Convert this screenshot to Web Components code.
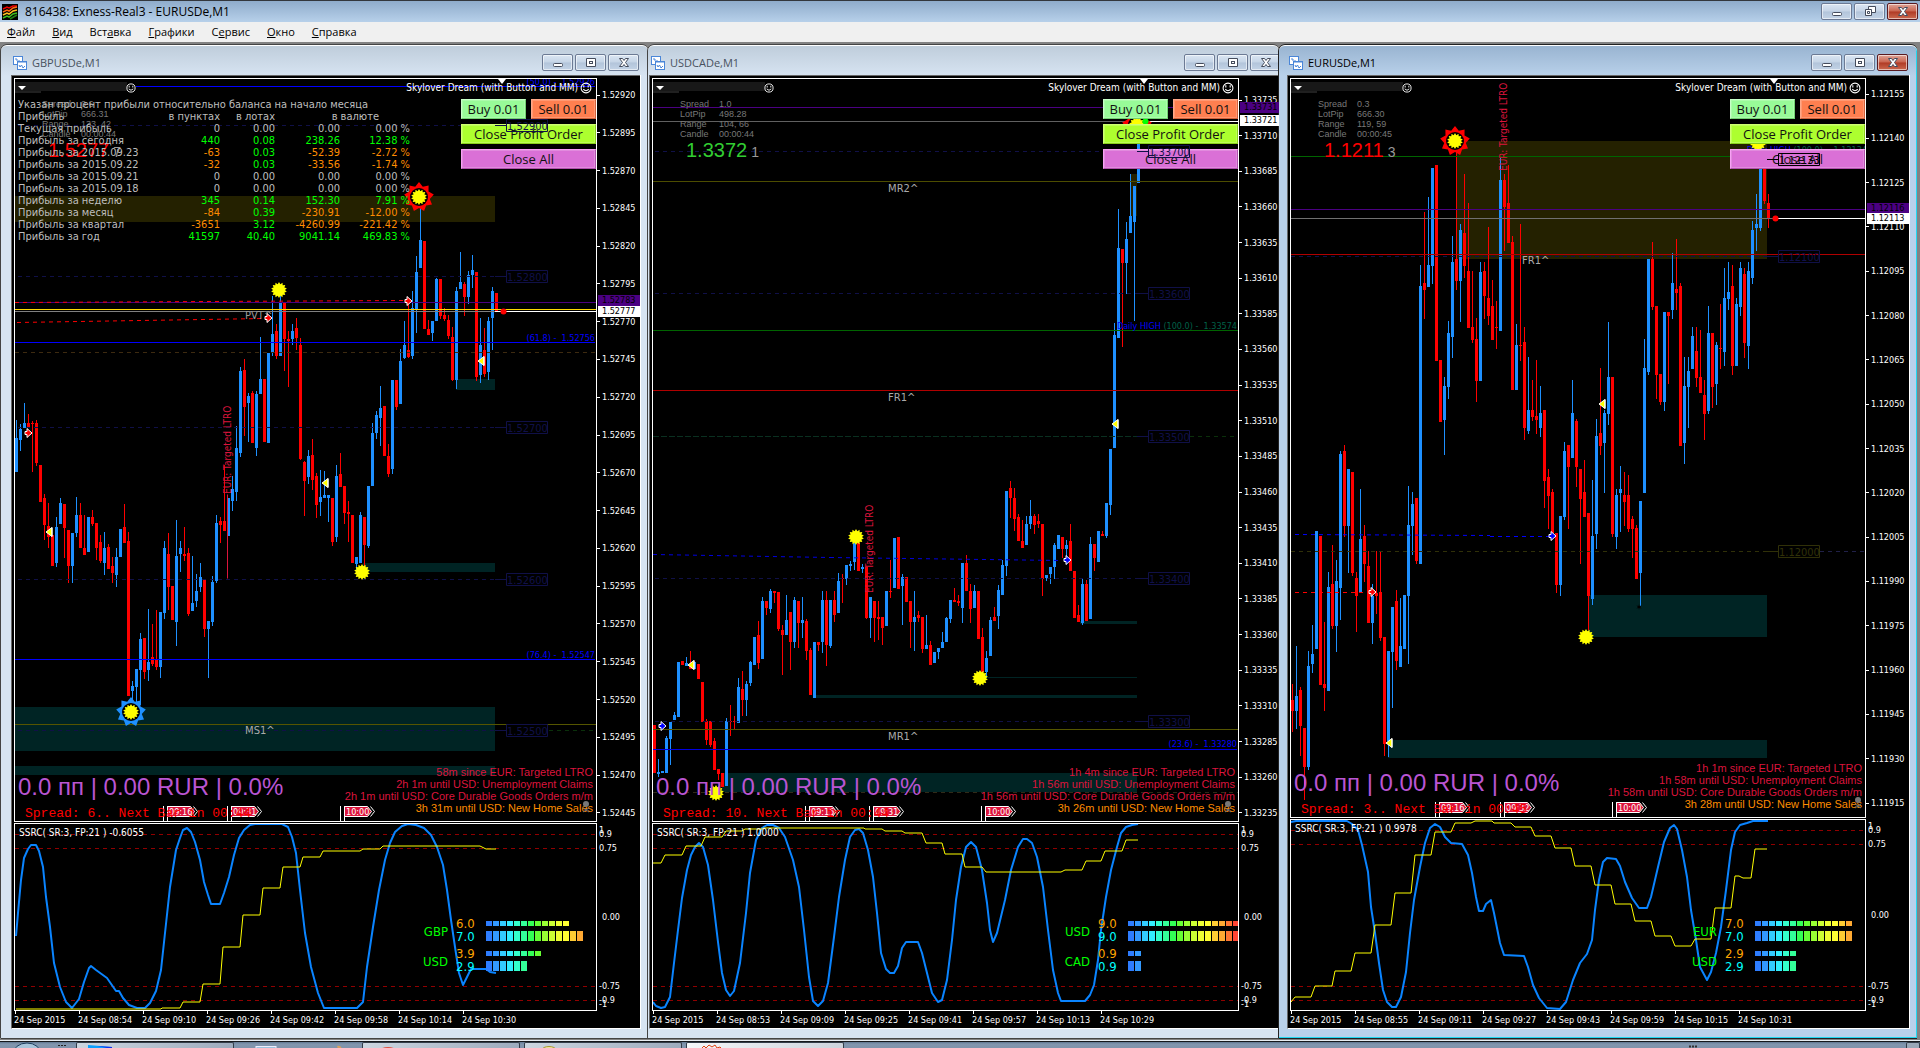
<!DOCTYPE html>
<html lang="ru">
<head>
<meta charset="utf-8">
<title>816438: Exness-Real3 - EURUSDe,M1</title>
<style>
html,body{margin:0;height:100%;background:#828282}
body{font-family:"Open Sans","Noto Sans",sans-serif;font-size:12px;overflow:hidden}
</style>
</head>
<body>
<mt-terminal></mt-terminal>
<script>
const TAHOMA = '"DejaVu Sans Condensed","DejaVu Sans",sans-serif';

/* Candles: colour, high, body top, body bottom, low; one every four pixels. */
const CHARTS = {
GBPUSDe: {
  ox:15, subTop:824, start:16,
  candles:`b,420,438,472,472 b,424,429,440,451 b,403,423,428,428 r,414,423,427,427 r,421,423,424,472 r,420,423,463,466 r,465,465,502,502 r,494,498,525,540 r,503,526,537,548 r,535,535,566,566 b,517,527,563,567 b,498,503,524,524 r,504,504,528,558 r,530,530,566,583 b,533,533,566,583 b,497,515,533,537 r,503,515,548,548 r,515,548,555,555 b,517,517,552,552 r,510,517,524,526 r,523,523,548,560 r,535,542,561,563 b,532,548,563,575 r,544,547,569,569 r,557,566,573,583 b,548,557,575,587 b,529,529,557,557 r,504,527,543,543 r,532,541,696,696 b,681,686,691,712 b,669,669,687,705 b,633,639,670,705 r,638,638,672,679 b,609,662,670,681 r,624,657,664,666 r,610,659,667,670 b,612,612,667,678 b,541,548,613,619 r,533,554,587,610 r,586,586,620,620 b,520,556,622,646 b,541,548,554,572 r,527,554,556,561 r,548,553,614,616 b,556,603,611,611 b,574,591,601,607 b,563,577,587,592 r,580,580,629,637 b,621,621,629,678 b,576,582,622,626 b,515,523,581,583 r,517,521,525,543 r,465,521,531,531 b,498,498,536,536 b,476,489,501,511 b,426,448,492,501 b,367,371,453,457 r,359,370,407,436 b,393,396,403,442 r,391,393,443,443 b,391,394,448,456 b,337,379,394,394 r,379,379,442,442 b,353,353,443,443 b,296,334,353,356 r,324,331,356,359 b,296,303,356,356 r,303,303,339,371 r,331,339,341,387 b,324,331,339,345 r,318,328,338,350 r,338,345,459,460 r,461,462,481,516 b,450,456,477,484 r,439,455,480,490 r,473,476,505,518 b,470,497,502,516 b,471,495,498,498 b,495,495,498,522 r,498,498,542,546 b,465,476,537,542 r,453,474,487,487 r,486,486,513,524 r,501,512,514,542 r,515,515,563,563 b,557,557,564,570 b,512,515,563,563 r,517,517,545,567 b,486,486,546,548 b,423,433,486,486 b,411,415,433,439 b,386,408,418,446 r,406,406,456,456 r,444,456,474,477 b,380,380,469,474 r,380,380,407,410 b,349,361,404,404 b,321,345,358,359 r,300,350,357,358 b,291,308,356,359 b,256,272,310,333 b,205,240,268,268 r,241,241,329,329 r,320,329,335,335 b,321,321,333,341 b,278,279,321,321 r,279,279,316,319 r,308,315,319,321 r,315,320,336,339 r,327,337,380,381 b,287,291,380,389 b,252,282,289,289 r,282,284,297,316 b,271,275,297,304 b,255,270,275,288 r,272,272,377,381 b,318,345,375,383 r,328,350,374,377 b,317,321,372,380 b,287,291,318,350 r,293,293,312,312`,
  axis:['1.52920','1.52895','1.52870','1.52845','1.52820','1.52795','1.52770','1.52745','1.52720','1.52695','1.52670','1.52645','1.52620','1.52595','1.52570','1.52545','1.52520','1.52495','1.52470','1.52445'],
  tags:[['1.52783',300,'#4b0082','#000'],['1.52777',311,'#fff','#000']],
  boxes:[[15,196,495,222,'#242100'],[456,379,495,390,'#002424'],[363,563,495,572,'#002424'],[15,707,495,751,'#002424'],[15,766,495,775,'#002424']],
  lines:[[136,86,595,86,'#00f',''],[18,125,495,125,'#101048','4 4'],[18,276,495,276,'#101048','4 4'],[15,302,597,302,'#4b0082',''],[15,302,405,300,'#f00','4 4'],[15,309,597,309,'#ffd700',''],[15,311,495,311,'#808080',''],[495,311,597,311,'#fff',''],[17,322,265,318,'#f00','4 4'],[15,342,595,342,'#00f',''],[15,352,597,352,'#3d2a10','4 4'],[18,427,495,427,'#101048','4 4'],[18,579,495,579,'#101048','4 4'],[15,659,595,659,'#00f',''],[15,724,597,724,'#555500',''],[18,730,495,730,'#101048','4 4'],[549,730,597,730,'#0a300a','4 4'],[227,494,227,578,'#dc143c','']],
  texts:[[245,319,'PVT^','#999'],[245,734,'MS1^','#aaa']],
  right:[[81,'(50.0) -  1.52926'],[337,'(61.8) -  1.52756'],[654,'(76.4) -  1.52547']],
  levels:[[125,'1.52900','#101048'],[276,'1.52800','#101048'],[427,'1.52700','#101048'],[579,'1.52600','#101048'],[730,'1.52500','#101048']],
  levelX:506, ltro:[227,494],
  suns:[[279,290],[419,197,'#f00'],[131,712,'#1e90ff'],[362,572]],
  tris:[[49,532],[325,483],[481,361]],
  arrows:[[408,301,'#f00'],[268,318,'#f00'],[28,433,'#f00']],
  dots:[[503,311,'#f00']],
  flags:[[163,'09:16'],[227,'09:31'],[340,'10:00']], flagY:806,
  info:['0.6','666.31','133, 42','00:00:44'], big:['1.5277','7','#f00'],
  spread:'Spread: 6.. Next Bar in 00:44',
  news:['58m since EUR: Targeted LTRO','2h 1m until USD: Unemployment Claims','2h 1m until USD: Core Durable Goods Orders m/m','3h 31m until USD: New Home Sales'],
  osc:'SSRC( SR:3, FP:21 ) -0.6055', oscLevels:[834,848,986,1000],
  blue:'16,936 18,913 21,880 24,858 28,849 31,845 36,845 39,851 43,867 46,897 50,927 54,963 60,987 66,1002 72,1008 79,999 84,982 89,968 91,966 96,970 107,978 116,991 119,991 123,998 129,1005 137,1008 145,1008 150,1003 156,991 161,970 165,933 170,887 176,850 180,838 183,830 187,828 191,832 195,842 200,860 204,882 208,895 211,904 220,904 224,893 229,877 234,855 239,838 244,830 250,825 255,824 282,824 288,827 292,837 296,853 300,890 305,933 311,967 318,993 324,1008 357,1008 363,1002 367,967 373,927 379,890 385,860 390,843 395,832 402,826 408,824 416,825 424,828 431,835 437,847 443,865 447,890 451,920 455,947 459,973 463,985 471,969 486,969 490,972 496,973',
  yellow:'16,1009 161,1009 162,1008 180,1008 183,1002 200,1002 203,984 220,984 223,947 240,947 243,915 260,915 263,888 280,888 283,867 300,867 303,857 320,857 323,851 360,851 363,849 380,849 383,846 480,846 486,849 496,849',
  strength:[['GBP','6.0','7.0',12,14],['USD','3.9','2.9',8,6]],
  times:['24 Sep 2015','24 Sep 08:54','24 Sep 09:10','24 Sep 09:26','24 Sep 09:42','24 Sep 09:58','24 Sep 10:14','24 Sep 10:30']
},
USDCADe: {
  ox:653, subTop:824, start:654,
  candles:`r,725,725,773,773 b,759,772,774,777 b,771,771,773,773 b,736,738,773,773 b,722,722,739,765 b,712,715,720,720 b,662,662,717,717 r,661,661,665,665 b,657,663,666,666 r,651,665,669,669 b,662,662,669,669 r,664,664,679,679 r,682,682,722,722 r,719,721,740,745 r,721,721,745,747 r,738,741,770,770 r,769,769,774,780 r,773,773,787,787 b,718,721,786,786 r,705,721,722,736 r,716,721,722,729 b,678,687,723,723 r,671,689,700,716 b,681,684,700,716 b,661,662,683,686 b,637,637,665,665 r,621,635,663,669 b,597,601,659,659 r,601,601,608,615 b,589,591,609,613 r,591,591,593,603 r,592,592,629,631 r,625,630,635,675 b,595,620,635,635 r,612,612,642,670 b,597,600,642,648 r,601,601,623,648 b,597,620,623,638 r,619,621,651,660 r,648,650,695,695 b,642,642,698,698 r,642,642,645,651 b,591,600,642,653 r,591,600,645,666 b,600,600,646,648 r,591,600,615,622 b,573,581,613,613 r,574,578,579,603 b,565,565,579,585 b,561,564,566,571 b,543,543,562,570 r,543,543,571,571 b,564,567,569,573 r,567,567,618,619 b,597,597,618,638 r,601,601,618,642 r,601,617,619,640 r,617,617,628,645 b,591,591,626,626 r,560,591,592,598 b,538,538,588,588 r,537,537,589,589 b,574,577,586,625 r,577,577,602,602 r,601,601,622,648 b,591,617,622,651 r,611,615,618,622 r,617,617,649,653 b,615,645,649,649 r,641,645,665,665 b,652,652,663,663 b,648,648,652,659 b,632,642,648,648 b,617,618,642,642 b,600,600,619,623 r,588,600,602,602 r,595,601,603,606 b,563,563,608,623 r,555,563,591,591 r,584,591,609,623 b,585,591,608,608 r,591,591,639,639 r,628,637,672,672 b,651,658,672,678 b,617,620,656,656 r,607,617,621,621 b,585,590,616,629 b,560,565,595,595 b,491,491,566,576 r,481,488,498,518 r,488,498,519,531 r,514,517,541,541 r,520,541,548,548 b,516,524,545,545 b,500,516,524,529 r,514,516,525,534 r,514,521,524,528 r,524,524,579,596 b,575,575,578,581 b,567,567,574,584 b,543,545,567,579 b,535,535,549,549 r,537,537,549,558 b,540,545,549,560 r,524,541,571,571 r,571,571,618,618 r,605,615,622,622 b,578,584,623,625 r,580,584,621,621 b,537,544,619,619 r,544,544,558,571 b,531,531,562,562 r,531,534,536,536 b,503,503,536,538 b,449,449,505,515 b,323,335,448,448 b,209,248,338,338 r,249,249,263,347 b,222,239,263,294 b,174,216,233,233 b,186,186,222,321 b,121,121,183,183`,
  axis:['1.33735','1.33710','1.33685','1.33660','1.33635','1.33610','1.33585','1.33560','1.33535','1.33510','1.33485','1.33460','1.33435','1.33410','1.33385','1.33360','1.33335','1.33310','1.33285','1.33260','1.33235'],
  tags:[['1.33731',107,'#4b0082','#000'],['1.33721',120,'#fff','#000']],
  boxes:[[1130,174,1137,216,'#242100'],[1080,621,1137,624,'#002424'],[987,677,1137,678,'#002424'],[815,695,1137,698,'#002424'],[722,773,1137,792,'#002424']],
  lines:[[653,107,1239,107,'#4b0082',''],[653,121,1137,121,'#606060',''],[1137,121,1239,121,'#fff',''],[655,151,1138,151,'#101048','4 4'],[653,181,1239,181,'#4d4d00',''],[655,293,1138,293,'#101048','4 4'],[653,330,1239,330,'#006400',''],[653,390,1239,390,'#b00000',''],[653,436,1138,436,'#0a3020','6 2'],[1190,436,1239,436,'#0a300a','4 4'],[653,554,830,557,'#0000e0','4 4'],[830,557,1062,560,'#0000e0','4 4'],[655,578,1138,578,'#101048','4 4'],[655,721,1138,721,'#101048','4 4'],[653,729,1239,729,'#555500',''],[653,749,1237,749,'#0000e0',''],[653,792,1239,792,'#302a18','4 4']],
  texts:[[888,192,'MR2^','#aaa'],[888,401,'FR1^','#aaa'],[888,740,'MR1^','#aaa']],
  right:[[325,'Daily HIGH',' (100.0) -  1.33574'],[743,'(23.6) -  1.33280']],
  levels:[[151,'1.33700','#101048'],[293,'1.33600','#101048'],[436,'1.33500','#101048'],[578,'1.33400','#101048'],[721,'1.33300','#101048']],
  levelX:1148, ltro:[869,593],
  suns:[[856,537],[980,678],[716,793],[1137,125,'#f00']],
  tris:[[691,665],[1115,424]],
  arrows:[[1067,560,'#00f'],[662,726,'#00f']],
  dots:[[1145,121,'#0f0']],
  flags:[[805,'09:15'],[869,'09:31'],[981,'10:00']], flagY:806,
  info:['1.0','498.28','104, 66','00:00:44'], big:['1.3372','1','#32cd32'],
  spread:'Spread: 10. Next Bar in 00:44',
  news:['1h 4m since EUR: Targeted LTRO','1h 56m until USD: Unemployment Claims','1h 56m until USD: Core Durable Goods Orders m/m','3h 26m until USD: New Home Sales'],
  osc:'SSRC( SR:3, FP:21 ) 1.0000', oscLevels:[834,848,986,1000],
  blue:'653,1002 656,1006 661,1008 665,1007 670,997 674,963 678,930 682,898 687,870 691,855 695,847 699,843 703,847 708,865 713,900 718,942 722,973 726,990 730,996 734,991 740,963 746,913 750,873 756,840 762,828 767,825 773,825 779,828 785,837 793,860 799,887 804,930 809,977 813,1001 818,1006 823,1001 828,983 834,937 839,897 845,860 850,837 855,830 859,829 863,833 868,850 873,877 877,913 881,953 886,969 890,973 894,973 898,966 902,948 906,942 918,942 922,953 928,977 932,993 938,1002 942,1000 947,980 952,940 956,900 961,867 966,847 971,842 976,847 982,870 987,903 990,930 993,942 997,933 1005,900 1011,870 1018,847 1023,839 1027,839 1032,843 1037,857 1043,887 1048,930 1053,970 1058,993 1061,1001 1085,1001 1090,995 1094,985 1098,960 1101,930 1106,897 1111,870 1117,847 1121,833 1126,827 1132,825 1138,824',
  yellow:'653,863 661,863 665,855 682,855 686,846 701,846 705,837 722,837 726,831 742,831 745,829 762,829 764,828 864,828 865,829 882,829 885,831 902,831 905,833 922,833 926,843 942,843 945,854 962,854 965,867 982,867 986,872 1061,872 1065,870 1082,870 1086,861 1101,861 1105,851 1122,851 1126,840 1138,840',
  strength:[['USD','9.0','9.0',16,16],['CAD','0.9','0.9',2,2]],
  times:['24 Sep 2015','24 Sep 08:53','24 Sep 09:09','24 Sep 09:25','24 Sep 09:41','24 Sep 09:57','24 Sep 10:13','24 Sep 10:29']
},
EURUSDe: {
  ox:1291, subTop:820, start:1292,
  candles:`r,684,700,711,732 b,646,696,711,729 r,687,690,726,756 r,728,728,767,800 b,651,666,767,770 b,625,654,664,673 b,531,531,649,649 r,536,536,685,685 r,622,684,688,711 b,572,587,691,691 r,545,584,626,629 b,560,581,626,652 b,451,454,588,620 r,445,451,526,537 b,469,469,526,573 r,472,472,573,576 r,572,578,596,632 b,489,539,593,593 r,525,536,564,582 r,551,566,623,623 b,584,596,623,644 r,551,593,596,614 r,551,592,638,641 r,637,637,744,756 b,651,651,741,757 b,607,607,652,708 r,590,601,661,670 b,598,646,667,667 b,595,595,649,649 b,486,525,596,664 b,492,504,526,555 r,498,498,561,564 b,265,286,564,564 r,212,283,290,319 b,197,265,287,287 b,168,168,266,284 r,165,165,361,361 r,360,360,422,422 b,377,386,420,455 b,321,333,387,399 b,236,262,337,358 r,150,259,281,290 b,224,230,281,322 r,174,233,266,278 r,203,271,328,328 r,271,327,340,343 r,318,339,381,402 b,262,272,381,381 r,262,271,296,319 r,227,298,316,325 r,280,306,340,340 r,301,327,328,349 b,158,180,331,331 r,174,180,207,251 r,165,203,243,243 r,236,242,390,390 b,324,345,390,390 r,224,345,346,361 r,327,342,428,440 b,357,410,431,434 r,380,410,417,421 r,360,416,420,434 b,386,413,428,437 r,410,410,481,508 r,469,477,496,529 r,489,492,533,533 r,533,533,585,593 b,516,516,585,596 b,442,451,517,520 r,445,445,467,529 b,380,413,458,458 r,419,421,467,487 r,469,469,499,564 r,460,492,517,517 r,513,513,596,630 b,480,536,599,605 b,419,436,534,549 r,368,433,446,455 b,410,413,443,493 b,322,377,414,425 r,377,377,534,537 b,489,495,537,549 b,466,489,493,532 r,472,495,502,526 r,475,495,529,532 r,516,519,529,558 r,525,528,579,579 b,501,501,573,606 b,339,368,493,493 b,259,259,372,375 r,242,259,307,310 r,306,306,375,399 r,374,374,402,405 b,312,312,402,411 r,312,312,316,384 b,253,283,310,319 r,239,289,293,310 r,283,286,446,446 b,357,386,443,464 b,357,371,387,428 b,327,336,369,369 r,327,351,378,387 r,330,377,393,393 r,380,395,414,440 b,306,333,411,414 r,333,333,387,408 b,342,345,384,405 r,304,348,349,369 b,268,298,352,366 b,262,292,299,310 r,265,286,366,375 b,298,304,366,366 b,262,268,307,316 r,268,274,343,358 b,262,271,346,369 b,221,230,278,284 b,194,224,228,251 b,145,145,228,231 r,169,169,201,204 r,194,203,219,228`,
  axis:['1.12155','1.12140','1.12125','1.12110','1.12095','1.12080','1.12065','1.12050','1.12035','1.12020','1.12005','1.11990','1.11975','1.11960','1.11945','1.11930','1.11915'],
  tags:[['1.12116',208,'#4b0082','#000'],['1.12113',218,'#fff','#000']],
  boxes:[[1456,141,1767,259,'#242100'],[1589,595,1767,637,'#002424'],[1388,740,1767,758,'#002424']],
  lines:[[1291,156,1866,156,'#006400',''],[1291,209,1866,209,'#4b0082',''],[1291,218,1775,218,'#707070',''],[1775,218,1866,218,'#fff',''],[1291,254,1866,254,'#b00000',''],[1291,256,1768,256,'#101048','4 4'],[1295,534,1490,535,'#00f','4 4'],[1490,536,1549,536,'#00f','4 4'],[1291,551,1768,551,'#303008','4 4'],[1820,551,1866,551,'#202048','4 4'],[1295,592,1370,592,'#f00','4 4']],
  texts:[[1522,264,'FR1^','#aaa']],
  right:[[149,'Daily HIGH',' (100.0) -  1.12134']],
  levels:[[159,'1.12133','#000'],[256,'1.12100','#101048'],[551,'1.12000','#303008']],
  levelX:1778, ltro:[1503,171],
  suns:[[1455,141,'#f00'],[1758,143],[1586,637]],
  tris:[[1602,404],[1389,743]],
  arrows:[[1552,536,'#00f'],[1372,592,'#f00']],
  dots:[[1775,218,'#f00']], star:[1639,607],
  flags:[[1435,'09:16'],[1500,'09:32'],[1612,'10:00']], flagY:802,
  info:['0.3','666.30','119, 59','00:00:45'], big:['1.1211','3','#f00'],
  spread:'Spread: 3.. Next Bar in 00:45',
  news:['1h 1m since EUR: Targeted LTRO','1h 58m until USD: Unemployment Claims','1h 58m until USD: Core Durable Goods Orders m/m','3h 28m until USD: New Home Sales'],
  osc:'SSRC( SR:3, FP:21 ) 0.9978', oscLevels:[830,844,986,1000],
  blue:'1291,822 1296,821 1347,821 1352,824 1358,830 1362,845 1368,872 1371,907 1375,933 1379,963 1383,990 1387,1002 1392,1007 1396,1007 1401,997 1406,972 1410,933 1414,900 1420,867 1425,843 1430,828 1435,824 1440,827 1445,837 1451,843 1462,844 1468,855 1472,873 1476,897 1479,911 1483,911 1486,904 1491,900 1494,913 1500,943 1504,955 1524,956 1528,967 1533,985 1539,998 1547,1008 1560,1009 1566,1002 1573,980 1580,963 1587,954 1592,940 1595,910 1599,880 1603,862 1607,858 1616,859 1620,866 1625,882 1632,898 1639,908 1647,908 1651,897 1658,867 1664,842 1670,828 1674,825 1677,829 1682,850 1687,877 1691,910 1696,940 1700,967 1707,980 1711,972 1716,953 1721,927 1726,890 1731,850 1735,832 1740,825 1747,823 1753,821 1768,821',
  yellow:'1291,1002 1295,997 1311,997 1315,986 1332,986 1335,971 1351,971 1355,953 1371,953 1375,925 1391,925 1395,893 1411,893 1415,855 1431,855 1435,832 1451,832 1455,823 1471,823 1475,821 1492,821 1494,823 1511,823 1515,827 1531,827 1535,836 1551,836 1555,848 1571,848 1575,866 1591,866 1595,885 1611,885 1615,904 1631,904 1635,921 1651,921 1655,936 1671,936 1675,946 1691,946 1695,939 1711,939 1715,908 1731,908 1735,876 1739,876 1743,878 1751,878 1755,849 1767,849',
  strength:[['EUR','7.0','7.0',14,14],['USD','2.9','2.9',6,6]],
  times:['24 Sep 2015','24 Sep 08:55','24 Sep 09:11','24 Sep 09:27','24 Sep 09:43','24 Sep 09:59','24 Sep 10:15','24 Sep 10:31']
}
};

/* ---------- drawing helpers ---------- */
const burst = (x, y, n, r1, r2, fill) => {
  let p = '';
  for (let i = 0; i < n * 2; i++) {
    const a = Math.PI * i / n - Math.PI / 2, r = i % 2 ? r2 : r1;
    p += (x + r * Math.cos(a)).toFixed(1) + ',' + (y + r * Math.sin(a)).toFixed(1) + ' ';
  }
  return `<polygon points="${p}" fill="${fill}"/>`;
};
const sun = ([x, y, ring]) => (ring ? burst(x, y, 9, 15, 11, ring) + `<circle cx="${x}" cy="${y}" r="9" fill="#000"/>` : '') + burst(x, y, 14, 8, 6, '#ff0');
const tri = ([x, y]) => `<path d="M${x + 3} ${y - 4.5}v9M${x - 3} ${y}l6 -4.5v9z" fill="#ff0" stroke="#fff"/>`;
const arrow = ([x, y, c]) => `<path d="M${x - 3} ${y - 1.5}h2v-3l5 4.5l-5 4.5v-3h-2z" fill="${c}" stroke="#fff"/>`;
const line = ([x1, y1, x2, y2, c, d]) => `<line x1="${x1}" y1="${y1 + .5}" x2="${x2}" y2="${y2 + .5}" stroke="${c}"${x1 === x2 ? ' transform="translate(.5 0)"' : ''}${d ? ` stroke-dasharray="${d}"` : ''}/>`;
const winIcon = {
  min: '<rect x="2.5" y="7.5" width="9" height="3" rx="1" fill="#fff" stroke="#454c5c"/>',
  max: '<path d="M2.5 2.5h9v8h-9z" fill="#fff" stroke="#454c5c"/><rect x="5.5" y="5.5" width="3" height="2" fill="#fff" stroke="#454c5c"/>',
  restore: '<path d="M5.5 1.5h7v6h-7z" fill="#fff" stroke="#454c5c"/><path d="M2.5 4.5h6v6h-6z" fill="#fff" stroke="#454c5c"/><path d="M4.5 6.5h2v2h-2z" fill="#fff" stroke="#454c5c"/>',
  close: '<path d="M2.5 2.5h3l1.5 2 1.5-2h3l-3 4 3 4h-3l-1.5-2-1.5 2h-3l3-4z" fill="#fff" stroke="#454c5c"/>'
};

class Base extends HTMLElement {
  constructor() { super(); this.attachShadow({ mode: 'open' }); }
  connectedCallback() { this.shadowRoot.innerHTML = `<style>${this.css()}</style>${this.html()}`; }
}

class WindowButtons extends Base {
  css() { return `
    :host{display:flex;gap:2px;flex:none}
    button{width:31px;height:17px;padding:0;border:1px solid #6c7a94;border-radius:2px;background:linear-gradient(#dbe6f3,#c5d4e6 48%,#b2c4da 52%,#c3d3e6);box-shadow:inset 0 0 0 1px #ffffff90;display:grid;place-items:center}
    svg{width:14px;height:13px;display:block}
    :host([active]) button:last-child{border-color:#591a20;background:linear-gradient(#dfa598,#c9644f 48%,#b03a25 52%,#cb6a50)}`; }
  html() {
    return ['min', this.getAttribute('middle') || 'max', 'close'].map(k => `<button aria-label="${k}"><svg viewBox="0 0 14 13">${winIcon[k]}</svg></button>`).join('');
  }
}
customElements.define('window-buttons', WindowButtons);

class TitleBar extends Base {
  css() { return `
    :host{display:flex;align-items:center;height:21px;border-top:1px solid #33373d;background:linear-gradient(#8faccb,#b7d0ea);padding:0 2px;color:#000}
    svg{width:16px;height:16px;margin-right:7px}
    span{flex:1;font-size:12px;line-height:20px}`; }
  html() { return `<svg viewBox="0 0 16 16"><rect width="16" height="16" fill="#000"/><g fill="none" stroke-width="1.5"><path d="M1 5l4-2 2 1 4-2 4 0" stroke="#f00000"/><path d="M1 8l4-2 2 1 4-3 4-1" stroke="#ff6a10"/><path d="M1 11l4-2 2 1 4-3 4-1" stroke="#ffc020"/><path d="M1 14l4-2 2 1 4-3 4-1" stroke="#40c020"/><path d="M8 15l7-4" stroke="#208010"/></g></svg><span>816438: Exness-Real3 - EURUSDe,M1</span><window-buttons active middle="restore"></window-buttons>`; }
}
customElements.define('mt-title-bar', TitleBar);

class MenuBar extends Base {
  css() { return `
    :host{display:flex;gap:17px;height:20px;padding:0 7px;background:#f0f0f0}
    button{border:0;padding:0;background:none;font:11px/20px "Open Sans","Noto Sans",sans-serif;color:#000}
    u{text-underline-offset:1px}`; }
  html() { return ['<u>Ф</u>айл', '<u>В</u>ид', 'Вст<u>а</u>вка', '<u>Г</u>рафики', 'С<u>е</u>рвис', '<u>О</u>кно', '<u>С</u>правка'].map(t => `<button>${t}</button>`).join(''); }
}
customElements.define('mt-menu-bar', MenuBar);

class ProfitReport extends Base {
  css() { return `
    :host{display:block;font:11px/12px ${TAHOMA};color:#bebebe}
    table{border-collapse:collapse;table-layout:fixed;width:392px}
    caption{text-align:left;white-space:nowrap;height:12px}
    td,th{padding:0;height:12px;font-weight:400;text-align:right;white-space:nowrap}
    th:first-child{text-align:left}
    .cur{padding-right:31px}
    .p{color:#0f0}.n{color:#ff8c00}`; }
  html() {
    const rows = [['Текущая прибыль', '0', '0.00', '0.00', '0.00'], ['Прибыль за сегодня', '440', '0.08', '238.26', '12.38'], ['Прибыль за 2015.09.23', '-63', '0.03', '-52.39', '-2.72'], ['Прибыль за 2015.09.22', '-32', '0.03', '-33.56', '-1.74'], ['Прибыль за 2015.09.21', '0', '0.00', '0.00', '0.00'], ['Прибыль за 2015.09.18', '0', '0.00', '0.00', '0.00'], ['Прибыль за неделю', '345', '0.14', '152.30', '7.91'], ['Прибыль за месяц', '-84', '0.39', '-230.91', '-12.00'], ['Прибыль за квартал', '-3651', '3.12', '-4260.99', '-221.42'], ['Прибыль за год', '41597', '40.40', '9041.14', '469.83']];
    const k = v => v > 0 ? 'p' : v < 0 ? 'n' : '';
    return `<table><caption>Указан процент прибыли относительно баланса на начало месяца</caption>
      <colgroup><col style="width:132px"><col style="width:70px"><col style="width:55px"><col style="width:65px"><col style="width:70px"></colgroup>
      <tr><th>Прибыль</th><th>в пунктах</th><th>в лотах</th><th colspan="2" class="cur">в валюте</th></tr>
      ${rows.map(r => `<tr><th>${r[0]}</th>${r.slice(1).map((v, i) => `<td class="${k(+v)}">${v}${i === 3 ? ' %' : ''}</td>`).join('')}</tr>`).join('')}</table>`;
  }
}
customElements.define('profit-report', ProfitReport);

class TradePanel extends Base {
  css() { return `
    :host{display:grid;grid-template-columns:65px 65px;gap:5px}
    button{height:20px;padding:0;border:1px solid;border-radius:0;font:13px/16px "Open Sans","Noto Sans",sans-serif;color:#111;white-space:nowrap;box-shadow:inset 0 0 0 1px #ffffff30}
    .wide{grid-column:1/3}
    .buy{background:#98fb98;border-color:#c8ffc8 #70d070 #70d070 #c8ffc8}
    .sell{background:#ff7f50;border-color:#ffa888 #d06038 #d06038 #ffa888}
    .profit{background:#adff2f;border-color:#d0ff70 #88d018 #88d018 #d0ff70}
    .all{background:#da70d6;border-color:#f8a0f5 #b050ac #b050ac #f8a0f5}`; }
  html() { return `<button class="buy">Buy 0.01</button><button class="sell">Sell 0.01</button><button class="wide profit">Close Profit Order</button><button class="wide all">Close All</button>`; }
}
customElements.define('trade-panel', TradePanel);

class MarketInfo extends Base {
  css() { return `
    :host{display:block;font:9px/10px "Liberation Sans",sans-serif;color:#787878}
    dl{margin:0;display:grid;grid-template-columns:39px 1fr}dt,dd{margin:0;white-space:nowrap}
    p{margin:0 0 0 6px;line-height:22px;font-size:20px;color:var(--price)}
    small{font-size:14px;color:#999;margin-left:4px}`; }
  html() {
    const c = CHARTS[this.getAttribute('symbol')];
    return `<dl>${['Spread', 'LotPip', 'Range', 'Candle'].map((k, i) => `<dt>${k}</dt><dd>${c.info[i]}</dd>`).join('')}</dl><p style="--price:${c.big[2]}">${c.big[0]}<small>${c.big[1]}</small></p>`;
  }
}
customElements.define('market-info', MarketInfo);

class StrengthMeter extends Base {
  css() { return `
    :host{display:grid;grid-template-columns:30px 38px 110px;font:13px/13px ${TAHOMA}}
    b{font-weight:400;color:#0f0;line-height:30px;text-align:right;height:30px}
    div{padding-left:8px}
    span{display:block;color:#ffa500}span+span{color:#0ff}
    .bars{padding:4px 0 0;display:grid;grid-template-rows:5px 10px;gap:5px;align-content:start;overflow:hidden}
    .bars p{margin:0;display:flex;gap:1px}
    i{flex:none;width:6px;height:100%}`; }
  html() {
    const cols = ['#2e7dff', '#3399ff', '#33ccff', '#33eeff', '#33ffcc', '#33ff99', '#33ff55', '#66ff33', '#99ff33', '#ccff33', '#eeff33', '#ffff33', '#ffcc33', '#ffaa33', '#ff7733', '#ff4433'];
    const bar = n => `<p>${cols.slice(0, n).map(c => `<i style="background:${c}"></i>`).join('')}</p>`;
    return CHARTS[this.getAttribute('symbol')].strength.map(s => `<b>${s[0]}</b><div><span>${s[1]}</span><span>${s[2]}</span></div><div class="bars">${bar(s[3])}${bar(s[4])}</div>`).join('');
  }
}
customElements.define('strength-meter', StrengthMeter);

class PricePlot extends Base {
  css() { return `
    :host{display:block;position:relative;overflow:hidden;color:#fff}
    svg{position:absolute;inset:0;width:100%;height:100%}
    text{white-space:pre}
    .px{font:10px "DejaVu Sans",sans-serif}
    .event{font:10px ${TAHOMA}}
    .fib{font:9px ${TAHOMA};text-anchor:end}
    .lvl{font:11px ${TAHOMA}}
    .flag{font:9px ${TAHOMA}}
    .mask{position:absolute;left:0;top:3px;width:121px;height:11px;box-sizing:border-box;display:flex;align-items:center;justify-content:space-between;padding-left:3px;background:linear-gradient(#181818,#181818) 0 0/112px 9px no-repeat,linear-gradient(#202020,#202020) 0 0/26px 11px no-repeat}
    .mask i{border:4px solid transparent;border-top-color:#fff;border-bottom:0}
    .mask svg,.ea svg{position:static;width:10px;height:10px}
    .ea svg{width:12px;height:12px}
    .ea{position:absolute;right:4px;top:2px;display:flex;align-items:center;gap:2px;font:10px/14px ${TAHOMA}}
    trade-panel{position:absolute;top:20px;right:0}
    profit-report{position:absolute;left:3px;top:20px}
    market-info{position:absolute;left:27px;top:20px}
    .total,.spread{position:absolute;left:3px;white-space:nowrap}
    .total{bottom:20px;font:24px/28px "Liberation Sans",sans-serif;color:#ba55d3}
    .spread{left:10px;bottom:0;font:13px/15px "Liberation Mono",monospace;color:#f00}
    ul{position:absolute;right:3px;bottom:7px;margin:0;padding:0;list-style:none;text-align:right;font:11px/12px "Liberation Sans",sans-serif;color:#dc143c;white-space:nowrap}
    li:last-child{color:#ff8c00}
    .levels{pointer-events:none}`; }
  html() {
    const id = this.getAttribute('symbol'), c = CHARTS[id];
    const candles = c.candles.split(' ').map((s, i) => {
      const [k, h, t, b, l] = s.split(','), x = c.start + 4 * i, f = k === 'r' ? '#f00' : '#1e90ff';
      return `<path fill="${f}" d="M${x} ${h}h1V${l}h-1zM${x - 1} ${t}h3V${Math.max(b, +t + 1)}h-3z"/>`;
    }).join('');
    const face = '<svg viewBox="0 0 11 11" fill="none" stroke="#fff"><circle cx="5.5" cy="5.5" r="4.5"/><path d="M3.5 3v2M7.5 3v2M3 6.5q2.5 3 5 0"/></svg>';
    const flags = c.flags.map(([x, t]) => `<path d="M${x + .5} ${c.flagY}v16M${x + 4.5} ${c.flagY}v16" stroke="#fff"/><path d="M${x + 4.5} ${c.flagY + .5}h23l4 5-4 5h-23z" fill="#dc143c" stroke="#fff"/><path d="M${x + 30.5} ${c.flagY + .5}l4 5-4 5" fill="none" stroke="#fff"/><text class="flag" x="${x + 6}" y="${c.flagY + 9}" fill="#fff">${t}</text>`).join('');
    const r = c.levelX + 89;
    const right = c.right.map(t => t.length === 3 ? `<text class="fib" x="${r}" y="${t[0] + 4}" fill="#006048"><tspan fill="#00f">${t[1]}</tspan>${t[2]}</text>` : `<text class="fib" x="${r}" y="${t[0] + 4}" fill="#00f">${t[1]}</text>`).join('');
    const [eventX, eventY] = c.ltro;
    return `<svg><g transform="translate(${-c.ox} -79)">
      ${c.boxes.map(b => `<rect x="${b[0]}" y="${b[1]}" width="${b[2] - b[0]}" height="${b[3] - b[1]}" fill="${b[4]}"/>`).join('')}
      ${candles}${c.lines.map(line).join('')}${right}
      ${c.texts.map(t => `<text class="px" x="${t[0]}" y="${t[1]}" fill="${t[3]}">${t[2]}</text>`).join('')}
      <text class="event" fill="#dc143c" transform="translate(${eventX + 4} ${eventY}) rotate(-90)">EUR: Targeted LTRO</text>
      ${c.tris.map(tri).join('')}${c.suns.map(sun).join('')}${c.arrows.map(arrow).join('')}
      ${c.star ? burst(c.star[0], c.star[1], 6, 3, 1, '#000') : ''}
      ${c.dots.map(d => `<circle cx="${d[0] + .5}" cy="${d[1] + .5}" r="3" fill="${d[2]}"/>`).join('')}
      <path d="M${c.levelX - 8} 79h8l-4 5z" fill="#fff"/>${flags}</g></svg>
      <div class="mask"><i></i>${face}</div>
      <market-info symbol="${id}"></market-info>
      ${this.hasAttribute('report') ? '<profit-report></profit-report>' : ''}
      <div class="ea">Skylover Dream (with Button and MM)${face}</div>
      <div class="spread">${c.spread}</div><div class="total">0.0 пп | 0.00 RUR | 0.0%</div>
      <ul>${c.news.map(n => `<li>${n}</li>`).join('')}</ul>
      <trade-panel></trade-panel>
      <svg class="levels"><g transform="translate(${-c.ox} -79)">${c.levels.map(([y, t, k]) => `<path d="M${c.levelX - 11} ${y + .5}h11M${c.levelX + .5} ${y - 5.5}h41v12h-41z" fill="none" stroke="${k}"/><text class="lvl" x="${c.levelX + 1}" y="${y + 5}" fill="${k}">${t}</text>`).join('')}
      <g transform="translate(${c.levelX + 80} ${c.flagY})" fill="#777"><circle cy="-2" r="3"/><path d="M-3 2l6 4M3 2l-6 4" stroke="#777"/></g></g></svg>`;
  }
}
customElements.define('price-plot', PricePlot);

class OscillatorPlot extends Base {
  css() { return `
    :host{display:block;position:relative;overflow:hidden;color:#fff}
    svg{position:absolute;inset:0;width:100%;height:100%}
    polyline{fill:none;stroke-linejoin:round}
    .name{position:absolute;left:4px;top:3px;font:10px/12px ${TAHOMA};white-space:nowrap}
    strength-meter{position:absolute;right:0;bottom:33px}`; }
  html() {
    const id = this.getAttribute('symbol'), c = CHARTS[id];
    return `<svg><g transform="translate(${-c.ox} ${-c.subTop})">${c.oscLevels.map(y => line([c.ox, y, c.ox + 600, y, '#900000', '4 4'])).join('')}
      <polyline points="${c.blue}" stroke="#0a84ff" stroke-width="2"/><polyline points="${c.yellow}" stroke="#ff0"/></g></svg>
      <div class="name">${c.osc}</div><strength-meter symbol="${id}"></strength-meter>`;
  }
}
customElements.define('oscillator-plot', OscillatorPlot);

class PriceAxis extends Base {
  css() { return `
    :host{display:flex;flex-direction:column;justify-content:space-between;position:relative;padding:var(--top,10px) 0 var(--bottom,3px) 0;font:9px/12px ${TAHOMA};color:#fff}
    span{display:flex;align-items:center;height:12px}
    span::before{content:"";width:3px;height:1px;background:#fff;margin-right:2px}
    b{position:absolute;left:1px;right:0;height:11px;line-height:11px;padding-left:4px;font-weight:400}`; }
  html() {
    const c = CHARTS[this.getAttribute('symbol')];
    return c.axis.map(t => `<span>${t}</span>`).join('') + c.tags.map(t => `<b style="top:${t[1] - 83}px;background:${t[2]};color:${t[3]}">${t[0]}</b>`).join('');
  }
}
customElements.define('price-axis', PriceAxis);

class OscillatorAxis extends Base {
  css() { return `
    :host{display:block;position:relative;font:9px/12px ${TAHOMA};color:#fff}
    span{position:absolute;left:2px}
    .z{left:5px}`; }
  html() {
    const c = CHARTS[this.getAttribute('symbol')], t = c.subTop + 5, l = c.oscLevels;
    return [['1', l[0] - 4], ['0.9', l[0]], ['0.75', l[1]], ['0.00', (l[1] + l[2]) / 2], ['-0.75', l[2]], ['-0.9', l[3]], ['-1', l[3] + 4]].map(([s, y]) => `<span${s === '0.00' ? ' class="z"' : ''} style="top:${Math.round(y - t)}px">${s}</span>`).join('');
  }
}
customElements.define('oscillator-axis', OscillatorAxis);

class TimeAxis extends Base {
  css() { return `
    :host{display:flex;height:17px;color:#fff;font:9px/18px ${TAHOMA};overflow:hidden}
    span{flex:none;width:64px;white-space:nowrap;background:linear-gradient(#fff,#fff) 1px 0/1px 3px no-repeat}`; }
  html() { return CHARTS[this.getAttribute('symbol')].times.map(t => `<span>${t}</span>`).join(''); }
}
customElements.define('time-axis', TimeAxis);

class ChartWindow extends Base {
  css() { return `
    :host{display:flex;flex-direction:column;min-width:0;overflow:hidden;box-sizing:border-box;border-top:1px solid #fff;background:linear-gradient(#bfcddb,#d7e4f2 30px);border-radius:6px 6px 0 0;box-shadow:-1px 0 #444,0 -1px #444,0 1px #444}
    :host([active]){background:linear-gradient(#99b4d1,#b9d1ea 30px);box-shadow:inset -1px -1px #20d8f0,-1px 0 #222,0 -1px #222,0 1px #222}
    header{display:flex;align-items:center;gap:5px;height:29px;padding:4px var(--hr) 0 var(--hl);margin-right:var(--shift,0);box-sizing:border-box;color:#48525e;flex:none}
    :host([active]) header{color:#000}
    header svg{width:14px;height:14px;flex:none}
    header span{flex:1;font-size:11px;line-height:20px}
    .client{flex:1;min-height:0;margin:0 var(--fr) 9px var(--fl);background:#000;border:solid #696969;border-width:1px 0 0 1px;border-bottom:1px solid #fff;box-shadow:1px 0 #fff;padding:2px 0 0 2px;display:grid;grid-template-columns:minmax(0,1fr) var(--axis);grid-template-rows:minmax(0,1fr) var(--osc) 17px}
    price-plot{border:1px solid #fff;margin-bottom:1px}
    oscillator-plot{border:1px solid #fff}
    price-axis{margin-bottom:1px}
    time-axis{grid-column:1/3}`; }
  html() {
    const s = this.getAttribute('symbol');
    return `<header><svg viewBox="0 0 14 14"><rect x="0.5" y="0.5" width="9" height="8" fill="#fff" stroke="#4a86d8"/><path d="M2 3h2v2M6 4v2" fill="none" stroke="#4a86d8"/><rect x="4.5" y="5.5" width="9" height="8" fill="#fff" stroke="#4a86d8"/><path d="M4 6h10" stroke="#4a86d8"/><path d="M6 9l1 2 1.5-2 1.5 3 2-2" fill="none" stroke="#4a86d8"/></svg><span>${s},M1</span><window-buttons${this.hasAttribute('active') ? ' active' : ''}></window-buttons></header>
    <div class="client"><price-plot symbol="${s}"${this.hasAttribute('report') ? ' report' : ''}></price-plot><price-axis symbol="${s}"></price-axis><oscillator-plot symbol="${s}"></oscillator-plot><oscillator-axis symbol="${s}"></oscillator-axis><time-axis symbol="${s}"></time-axis></div>`;
  }
}
customElements.define('chart-window', ChartWindow);

class TaskBar extends Base {
  css() { return `
    :host{display:flex;height:7px;box-sizing:border-box;overflow:hidden;border-top:1px solid #15181c;background:linear-gradient(#5f7590,#8296ae 2px,#8094ac);align-items:stretch}
    svg{display:block;height:7px;overflow:hidden}
    .start{width:76px}.quick{width:128px}
    button{width:158px;margin-right:4px;padding:0;border:1px solid #333d49;border-bottom:0;border-radius:2px 2px 0 0;background:linear-gradient(100deg,#cdd6e0,#9dabbd)}
    .first{margin:0}.on{background:linear-gradient(100deg,#f5f7f9,#ccd3dc)}
    .fill{flex:1}.tray{width:217px}.show{width:14px;margin:0;background:#9aa8b8}`; }
  html() { return `
    <svg class="start" viewBox="0 0 76 7"><ellipse cx="27" cy="12" rx="14" ry="11" fill="#a8c4da" stroke="#1c3d5c"/><path d="M58 3.5h9" stroke="#222" stroke-dasharray="2 1"/></svg>
    <button class="first" aria-label="window 1"><svg width="60" viewBox="0 0 60 7"><path d="M11 2l24 2v3h-24z" fill="#0aa0ff"/><path d="M20 3l15 1v2z" fill="#1030f0"/></svg></button>
    <svg class="quick" viewBox="0 0 128 7"><rect x="22" y="4.5" width="20" height="6" fill="#9cc4e0" stroke="#eef"/><path d="M103 4q4-1 5 3h-4z" fill="#d8a060"/></svg>
    <button aria-label="window 2"><svg width="60" viewBox="0 0 60 7"><ellipse cx="25" cy="7" rx="8" ry="3" fill="#e05040"/></svg></button>
    <button aria-label="window 3"><svg width="60" viewBox="0 0 60 7"><ellipse cx="24" cy="7" rx="7" ry="3.5" fill="#f0e8a0" stroke="#a89830"/></svg></button>
    <button class="on" aria-label="window 4"><svg width="60" viewBox="0 0 60 7"><path d="M14 6l3-3 2 2 3-3 3 2 3-2 2 3 3-1 2 2" fill="none" stroke="#e04010"/></svg></button>
    <span class="fill"></span><svg class="tray" viewBox="0 0 217 7"><path d="M0 4.5h9" stroke="#333" stroke-width="2" stroke-dasharray="2 1"/></svg><button class="show" aria-label="desktop"></button>`; }
}
customElements.define('task-bar', TaskBar);

class Terminal extends Base {
  css() { return `
    :host{display:flex;flex-direction:column;height:100vh}
    main{flex:1;min-height:0;display:grid;grid-template-columns:647fr 631fr 638fr;padding:3px 3px 2px 1px;background:#828282;border-bottom:1px solid #e8edf2}
    .gbp{--hl:12px;--hr:9px;--fl:10px;--fr:8px;--axis:43px;--osc:188px;--top:11px}
    .cad{--hl:3px;--hr:0;--shift:-2px;--fl:1px;--fr:0;--axis:40px;--osc:188px;--top:16px}
    .eur{--hl:10px;--hr:9px;--fl:8px;--fr:8px;--axis:43px;--osc:192px;--top:10px;--bottom:9px}`; }
  html() { return `<mt-title-bar></mt-title-bar><mt-menu-bar></mt-menu-bar>
    <main><chart-window class="gbp" symbol="GBPUSDe" report></chart-window><chart-window class="cad" symbol="USDCADe"></chart-window><chart-window class="eur" symbol="EURUSDe" active></chart-window></main>
    <task-bar></task-bar>`; }
}
customElements.define('mt-terminal', Terminal);
</script>
</body>
</html>
